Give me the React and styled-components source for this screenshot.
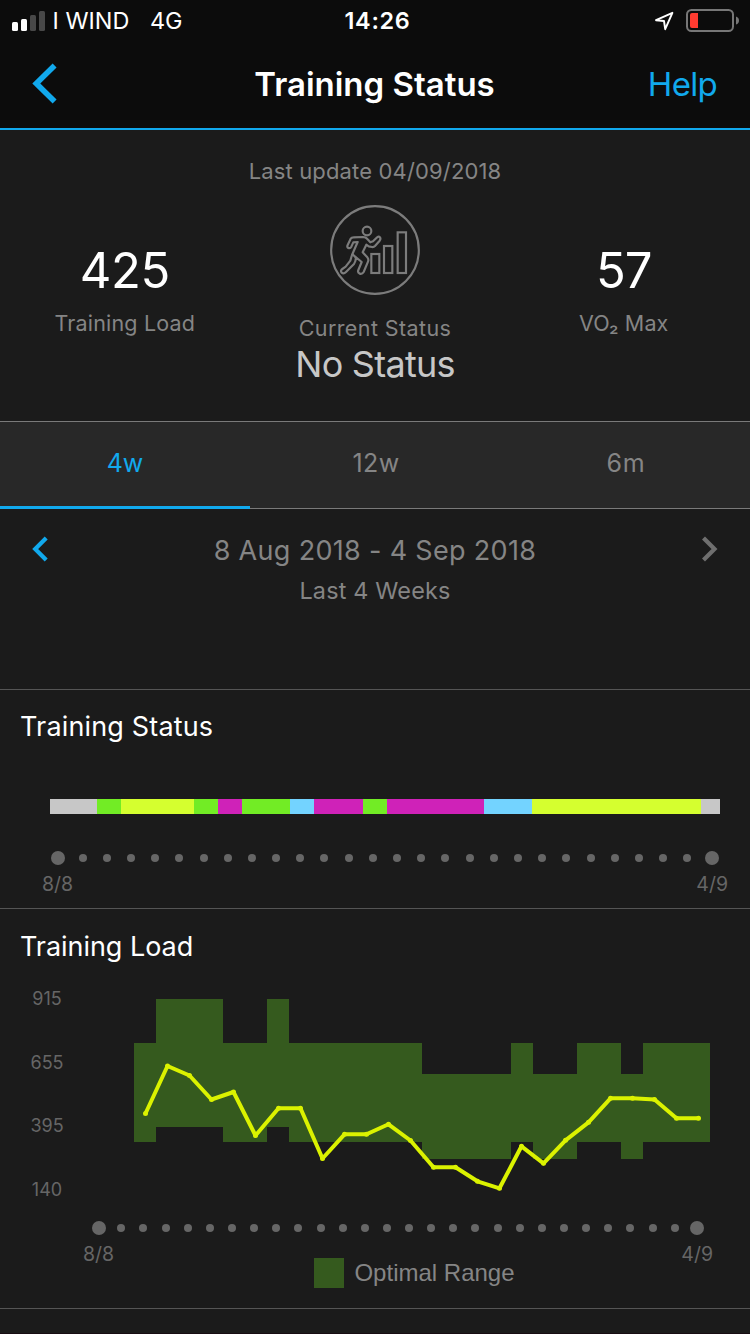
import React from "react";
import styled, { createGlobalStyle } from "styled-components";

// Theme colors
const blue = "#11a9ed";
const headerBg = "#0c0c0c";
const pageBg = "#1b1b1b";
const tabBg = "#282828";
const line = "#555555";
const tabLine = "#7a7a7a";
const grey = "#858585";
const dimGrey = "#666666";
const rangeGreen = "#355a1e";

const GlobalStyle = createGlobalStyle`
  * {
    box-sizing: border-box;
  }

  body {
    margin: 0;
    background: ${pageBg};
    font-family: Inter, "Liberation Sans", sans-serif;
    color: #ffffff;
  }

  svg {
    display: block;
  }
`;

const Screen = styled.main`
  width: 750px;
  height: 1334px;
  display: flex;
  flex-direction: column;
  overflow: hidden;
  background: ${pageBg};
  border-bottom: 1px solid #170c12;
`;

const Text = styled.span`
  display: block;
  white-space: pre;
  font-size: ${(p) => p.$size}px;
  line-height: ${(p) => p.$line}px;
  letter-spacing: ${(p) => p.$track || 0}px;
  font-weight: ${(p) => p.$weight || 400};
  color: ${(p) => p.$color || "#ffffff"};
`;

const Header = styled.header`
  height: 130px;
  background: ${headerBg};
  border-bottom: 2px solid ${blue};
`;

const StatusBar = styled.div`
  height: 41px;
  display: grid;
  grid-template-columns: 250px 250px 250px;
  align-items: center;
`;

const Carrier = styled.div`
  display: flex;
  align-items: center;
  padding-left: 12px;

  svg {
    margin-right: 7.6px;
  }
`;

const Network = styled.div`
  margin-left: 20.6px;
`;

const Clock = styled.div`
  display: flex;
  justify-content: center;
  padding-left: 5px;
`;

const Indicators = styled.div`
  display: flex;
  align-items: center;
  justify-content: flex-end;
  gap: 12px;
  padding-right: 10px;
`;

const NavBar = styled.nav`
  height: 86px;
  display: grid;
  grid-template-columns: 150px 1fr 150px;
  align-items: center;
  justify-items: center;
  padding: 0 33px 0 32px;
`;

const NavSide = styled.div`
  justify-self: ${(p) => p.$side};
`;

const Summary = styled.section`
  height: 291px;
  padding-top: 26px;
`;

const Updated = styled.div`
  display: flex;
  justify-content: center;
`;

const Stats = styled.div`
  display: grid;
  grid-template-columns: 250px 250px 250px;
`;

const Stat = styled.div`
  display: flex;
  flex-direction: column;
  align-items: center;
  gap: ${(p) => p.$gap}px;
  padding-top: ${(p) => p.$top}px;
  padding-right: ${(p) => p.$right || 0}px;
`;

const StatusLabels = styled.div`
  display: flex;
  flex-direction: column;
  align-items: center;
`;

const Tabs = styled.div`
  height: 88px;
  display: grid;
  grid-template-columns: repeat(3, 1fr);
  background: ${tabBg};
  border-top: 1px solid ${tabLine};
`;

const Tab = styled.div`
  display: flex;
  justify-content: center;
  padding-top: 21px;
  padding-left: ${(p) => (p.$active ? 0 : 2)}px;
  border-bottom: ${(p) => (p.$active ? `3px solid ${blue}` : `1px solid ${tabLine}`)};
`;

const Period = styled.section`
  height: 181px;
  display: flex;
  justify-content: space-between;
  padding: 22px 32px 0;
  border-bottom: 1px solid ${line};
`;

const PeriodText = styled.div`
  display: flex;
  flex-direction: column;
  align-items: center;
`;

const Arrow = styled.div`
  padding-top: 5px;
`;

const StatusCard = styled.section`
  height: 219px;
  border-bottom: 1px solid ${line};
  padding-top: 17px;
`;

const Heading = styled.h2`
  margin: 0;
  padding-left: 20px;
`;

const StatusBarRow = styled.div`
  display: flex;
  height: 15px;
  margin: 52px 30px 0 50px;
`;

const Segment = styled.div`
  width: ${(p) => p.$width}px;
  background: ${(p) => p.$color};
`;

const DotRow = styled.div`
  margin-top: ${(p) => p.$top}px;
`;

const DateLabels = styled.div`
  display: flex;
  justify-content: space-between;
  margin-top: 4px;
  padding: 0 ${(p) => p.$right}px 0 ${(p) => p.$left}px;
`;

const LoadCard = styled.section`
  height: 400px;
  border-bottom: 1px solid ${line};
  padding-top: 18px;
`;

const Plot = styled.div`
  display: grid;
  grid-template-columns: 94px 1fr;
  column-gap: 40px;
  height: 220px;
  margin-top: 21px;
`;

const Axis = styled.div`
  display: flex;
  flex-direction: column;
  align-items: center;
  gap: 43.7px;
  padding-top: 1px;
`;

const Series = styled.div`
  padding-top: 11px;
`;

const Legend = styled.div`
  display: flex;
  align-items: center;
  justify-content: center;
  gap: 10px;
  margin-top: -11px;
  padding-left: 79px;
`;

const Swatch = styled.div`
  width: 30px;
  height: 30px;
  background: ${rangeGreen};
`;

const LegendText = styled(Text)`
  font-family: "Liberation Sans", Arial, sans-serif;
`;

const silver = "#c7c7c7";
const green = "#72ec25";
const yellow = "#d5ff2f";
const magenta = "#cf22b8";
const sky = "#73d3ff";

const segments = [
  [47, silver],
  [24, green],
  [73, yellow],
  [24, green],
  [24, magenta],
  [48, green],
  [24, sky],
  [49, magenta],
  [24, green],
  [97, magenta],
  [48, sky],
  [169, yellow],
  [19, silver],
];

const loadLine = [
  [11.5, 114.5], [33.5, 67], [55.5, 76.5], [77.5, 100.5], [99.5, 93],
  [121.5, 136.5], [144.5, 109.3], [166.5, 109.3], [188.5, 159.5], [210.5, 135.3],
  [232.5, 135.3], [254.5, 125.3], [276.5, 141.5], [299.5, 168.3], [321.5, 168.3],
  [343.5, 182.3], [365.5, 189.3], [387.5, 147.3], [409.5, 164.3], [431.5, 141.3],
  [454.5, 123.3], [476.5, 99.3], [498.5, 99.3], [520.5, 100.5], [542.5, 119.3],
  [564.5, 119.3],
];

const rangePath =
  "M0 44H22V0H89V44H133V0H155V44H288V75H377V44H399V75H443V44H487V75H509V44H576" +
  "V143H509V160H487V143H443V160H399V143H377V160H288V143H155V128H133V143H89V128H22V143H0Z";

const loadTicks = [915, 655, 395, 140];

const Dots = ({ start, step }) => (
  <svg width="750" height="14" viewBox="0 0 750 14" fill={dimGrey}>
    {Array.from({ length: 28 }, (_, i) => (
      <circle key={i} cx={Math.round(start + step * i)} cy="7" r={i === 0 || i === 27 ? 7 : 4} />
    ))}
  </svg>
);

const SignalIcon = () => (
  <svg width="33" height="20" viewBox="0 0 33 20">
    <rect x="0" y="11" width="6" height="9" rx="1.5" fill="#fff" />
    <rect x="9" y="8" width="6" height="12" rx="1.5" fill="#fff" />
    <rect x="18" y="4" width="6" height="16" rx="1.5" fill="#484848" />
    <rect x="27" y="0" width="6" height="20" rx="1.5" fill="#484848" />
  </svg>
);

const LocationIcon = () => (
  <svg width="20" height="20" viewBox="0 0 20 20">
    <path
      d="M18.4 1.8L2 9.2L10 10L11.2 18.2Z"
      fill="none"
      stroke="#fff"
      strokeWidth="1.9"
      strokeLinejoin="round"
    />
  </svg>
);

const BatteryIcon = () => (
  <svg width="54" height="23" viewBox="0 0 54 23">
    <rect x="1" y="1" width="46" height="21" rx="4.5" fill="none" stroke="#777" strokeWidth="2" />
    <path d="M4 6Q4 4 6 4H12V19H6Q4 19 4 17Z" fill="#ff3b30" />
    <path d="M50 7.5Q53 8.5 53 11.5T50 15.5Z" fill="#777" />
  </svg>
);

const BackIcon = () => (
  <svg width="26" height="42" viewBox="0 0 26 42">
    <path d="M22.6 2.4L4.3 20.5L22.6 38.6" fill="none" stroke={blue} strokeWidth="5.6" />
  </svg>
);

const Chevron = ({ color, flip }) => (
  <svg width="17" height="26" viewBox="0 0 17 26">
    <path
      d={flip ? "M2.5 2L13.5 13L2.5 24" : "M14.2 2L3.2 13L14.2 24"}
      fill="none"
      stroke={color}
      strokeWidth="4.2"
    />
  </svg>
);

const RunnerIcon = () => (
  <svg
    width="90"
    height="90"
    viewBox="30 30 270 270"
    fill="none"
    stroke="#7c7c7c"
    strokeWidth="6.5"
    strokeLinejoin="round"
  >
    <circle cx="165" cy="165" r="131.5" />
    <circle cx="141" cy="108" r="13" />
    <path
      d="M92 131Q95 127 100 127L129 126Q137 126 142 132L151 142L159 139L170 128Q176 122 180 127Q183 132 179 137L165 153
      Q161 157 156 156L146 154L139 149L128 172L142 187Q147 193 144 200L131 231Q127 238 119 236Q112 232 115 225L125 201
      L107 186Q109 196 102 207L78 231Q71 238 65 233Q60 227 67 222L77 215L91 197L96 180L113 141L100 142L94 155Q91 161 85 159
      Q80 156 83 150Z"
    />
    <path d="M96 176L107 187" />
    <g strokeLinejoin="miter">
      <rect x="154" y="177" width="24" height="57" />
      <rect x="192" y="153" width="25" height="81" />
      <rect x="233" y="112" width="25" height="122" />
    </g>
  </svg>
);

export default function App() {
  return (
    <Screen>
      <GlobalStyle />

      <Header>
        <StatusBar>
          <Carrier>
            <SignalIcon />
            <Text $size={23.4} $line={28}>I WIND</Text>
            <Network>
              <Text $size={23.4} $line={28}>4G</Text>
            </Network>
          </Carrier>
          <Clock>
            <Text $size={23.4} $line={28} $weight={600} $track={0.7}>14:26</Text>
          </Clock>
          <Indicators>
            <LocationIcon />
            <BatteryIcon />
          </Indicators>
        </StatusBar>
        <NavBar>
          <NavSide $side="start">
            <BackIcon />
          </NavSide>
          <Text $size={33} $line={40} $weight={600} $track={0}>Training Status</Text>
          <NavSide $side="end">
            <Text $size={33} $line={40} $track={-0.7} $color={blue}>Help</Text>
          </NavSide>
        </NavBar>
      </Header>

      <Summary>
        <Updated>
          <Text $size={22} $line={30} $track={0.15} $color={grey}>Last update 04/09/2018</Text>
        </Updated>
        <Stats>
          <Stat $top={55} $gap={7} $right={0.5}>
            <Text $size={49} $line={60} $track={-0.4}>425</Text>
            <Text $size={21.5} $line={30} $track={0.18} $color={grey}>Training Load</Text>
          </Stat>
          <Stat $top={19} $gap={18}>
            <RunnerIcon />
            <StatusLabels>
              <Text $size={21.5} $line={30} $track={0.4} $color={grey}>Current Status</Text>
              <Text $size={36} $line={42} $track={-0.75} $color="#c7c7c7">No Status</Text>
            </StatusLabels>
          </Stat>
          <Stat $top={55} $gap={7} $right={2.5}>
            <Text $size={49} $line={60} $track={-1}>57</Text>
            <Text $size={21.5} $line={30} $track={0.15} $color={grey}>VO₂ Max</Text>
          </Stat>
        </Stats>
      </Summary>

      <Tabs>
        <Tab $active>
          <Text $size={25} $line={40} $color={blue}>4w</Text>
        </Tab>
        <Tab>
          <Text $size={25} $line={40} $track={0.4} $color={grey}>12w</Text>
        </Tab>
        <Tab>
          <Text $size={25} $line={40} $track={0.9} $color={grey}>6m</Text>
        </Tab>
      </Tabs>

      <Period>
        <Arrow>
          <Chevron color={blue} />
        </Arrow>
        <PeriodText>
          <Text $size={27} $line={40} $track={0.32} $color={grey}>8 Aug 2018 - 4 Sep 2018</Text>
          <Text $size={23.4} $line={40} $track={0.18} $color={grey}>Last 4 Weeks</Text>
        </PeriodText>
        <Arrow>
          <Chevron color="#6f6f6f" flip />
        </Arrow>
      </Period>

      <StatusCard>
        <Heading>
          <Text $size={27} $line={40} $track={0.16}>Training Status</Text>
        </Heading>
        <StatusBarRow>
          {segments.map(([width, color], index) => (
            <Segment key={index} $width={width} $color={color} />
          ))}
        </StatusBarRow>
        <DotRow $top={37}>
          <Dots start={58.4} step={24.19} />
        </DotRow>
        <DateLabels $left={42} $right={22}>
          <Text $size={19.5} $line={30} $color={dimGrey}>8/8</Text>
          <Text $size={19.5} $line={30} $color={dimGrey}>4/9</Text>
        </DateLabels>
      </StatusCard>

      <LoadCard>
        <Heading>
          <Text $size={27} $line={40} $track={-0.05}>Training Load</Text>
        </Heading>
        <Plot>
          <Axis>
            {loadTicks.map((tick) => (
              <Text key={tick} $size={18} $line={20} $color={dimGrey}>{tick}</Text>
            ))}
          </Axis>
          <Series>
            <svg width="576" height="200" viewBox="0 0 576 200">
              <path d={rangePath} fill={rangeGreen} />
              <polyline
                points={loadLine.map((p) => p.join(",")).join(" ")}
                fill="none"
                stroke="#dbf200"
                strokeWidth="4"
                strokeLinejoin="round"
              />
              {loadLine.map(([x, y]) => (
                <circle key={x} cx={x} cy={y} r="2.5" fill="#dbf200" />
              ))}
            </svg>
          </Series>
        </Plot>
        <DotRow $top={13}>
          <Dots start={99.2} step={22.135} />
        </DotRow>
        <DateLabels $left={83} $right={37}>
          <Text $size={19.5} $line={30} $color={dimGrey}>8/8</Text>
          <Text $size={19.5} $line={30} $color={dimGrey}>4/9</Text>
        </DateLabels>
        <Legend>
          <Swatch />
          <LegendText $size={24} $line={30} $color={grey}>Optimal Range</LegendText>
        </Legend>
      </LoadCard>
    </Screen>
  );
}
